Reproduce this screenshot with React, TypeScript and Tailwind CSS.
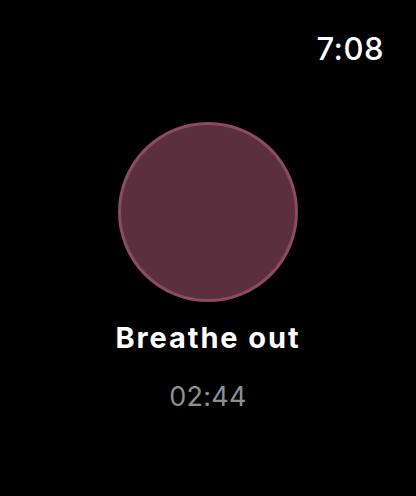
export default function App() {
	return (
		<div
			className="flex h-[496px] w-[416px] flex-col bg-black text-white"
			style={{ fontFamily: "Inter, 'Noto Sans', sans-serif" }}
		>
			<div className="flex justify-end pr-[32px] pt-[33px]">
				<span className="text-[31px] leading-[31px] font-medium tracking-[0.5px]">7:08</span>
			</div>

			<div className="mt-[58px] flex justify-center">
				<div className="h-[180px] w-[180px] rounded-full border-[3px] border-[#8c4b63] bg-[#5c2f3e]" />
			</div>

			<div className="mt-[19px] text-center text-[29px] leading-[34px] font-bold tracking-[1.9px]">
				Breathe out
			</div>
			<div className="mt-[27px] text-center text-[27px] leading-[30px] tracking-[0.3px] text-[#8e8e93]">
				02:44
			</div>
		</div>
	);
}
